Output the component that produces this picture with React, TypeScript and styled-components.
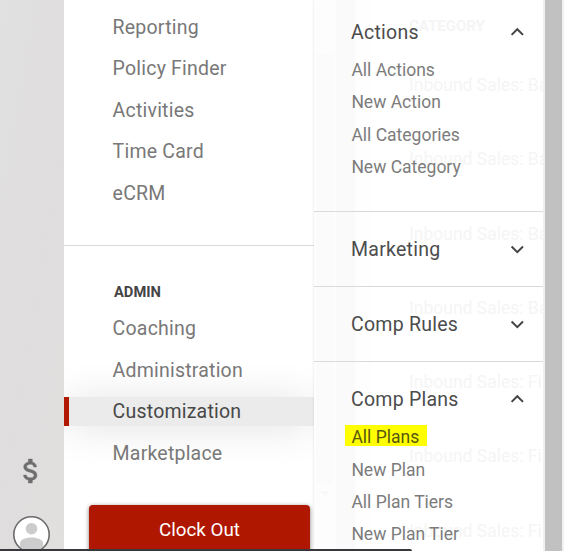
import React from 'react';
import styled, { createGlobalStyle } from 'styled-components';

const GlobalStyle = createGlobalStyle`
  * {
    box-sizing: border-box;
  }

  body {
    margin: 0;
    background: #fff;
    font-family: Roboto, "Liberation Sans", sans-serif;
    overflow: hidden;
  }
`;

const Screen = styled.div`
  position: relative;
  display: flex;
  width: 564px;
  height: 551px;
  overflow: hidden;
  background: #fff;
`;

const Rail = styled.div`
  display: flex;
  flex-direction: column;
  justify-content: flex-end;
  align-items: center;
  width: 64px;
  padding-right: 2px;
  background: linear-gradient(100deg, #e2e1e1, #dfdddd 55%, #e2dfdf);
`;

const DollarIcon = styled.svg`
  width: 32px;
  height: 32px;
  margin-bottom: 28px;
`;

const Avatar = styled.svg`
  width: 38px;
  height: 38px;
  margin-bottom: -2px;
  flex-shrink: 0;
`;

const Sidebar = styled.nav`
  display: flex;
  flex-direction: column;
  width: 250px;
  padding-top: 6.5px;
  background: #fff;
  overflow: hidden;
`;

const NavItem = styled.a<{ $active?: boolean }>`
  position: relative;
  display: flex;
  align-items: center;
  flex-shrink: 0;
  height: 41.5px;
  padding-left: 48.6px;
  font-size: 19.5px;
  letter-spacing: 0.21px;
  color: ${({ $active }) => ($active ? '#484848' : '#787878')};
  z-index: ${({ $active }) => ($active ? 0 : 1)};
`;

const ActiveBar = styled.span`
  position: absolute;
  z-index: -1;
  left: 0;
  right: 0;
  top: 6px;
  height: 29px;
  border-left: 5px solid #b11800;
  background: #ebebeb;
  box-shadow: 0 2px 40px -4px rgba(0, 0, 0, 0.17);
`;

const AdminBlock = styled.div`
  display: flex;
  flex-direction: column;
  margin-top: 31px;
  border-top: 1px solid #dadada;
`;

const AdminTitle = styled.div`
  margin: 38px 0 7px 50px;
  font-size: 14.7px;
  line-height: 17px;
  font-weight: 700;
  color: #444;
`;

const ClockButton = styled.button`
  width: 221px;
  height: 50px;
  flex-shrink: 0;
  margin: 31px 0 0 25px;
  padding: 0 0 1px;
  border: 0;
  border-radius: 4px;
  background: #b01700;
  box-shadow: 0 1px 4px rgba(0, 0, 0, 0.5);
  font: 400 18.8px Roboto, sans-serif;
  color: #fff;
`;

const Flyout = styled.div`
  position: relative;
  width: 229px;
  background: #fff;
  box-shadow: -1px 0 2px rgba(0, 0, 0, 0.06);
  overflow: hidden;
  z-index: 1;
`;

/* the page below shows faintly through the flyout */
const Backdrop = styled.div`
  position: absolute;
  inset: 0;
  background: linear-gradient(
    to right,
    #fdfdfd 0 22px,
    #fafafa 22px 41px,
    #fefefe 41px 57px,
    #fff 57px
  );
`;

const BackdropTrack = styled.div`
  position: absolute;
  left: 2px;
  top: 54px;
  width: 17px;
  height: 430px;
  background: #fbfbfb;
`;

const BackdropArrow = styled.div`
  position: absolute;
  left: 6px;
  top: 491px;
  border: 5px solid transparent;
  border-top-color: #f8f8f8;
`;

const BackdropTable = styled.div`
  position: absolute;
  left: 95px;
  top: 16px;
  white-space: nowrap;
  font-size: 17.5px;
  color: #f5f5f5;
`;

const BackdropHead = styled.div`
  height: 32px;
  font-size: 15px;
  line-height: 20px;
  font-weight: 700;
`;

const BackdropRow = styled.div`
  height: 74.3px;
  line-height: 74.3px;
`;

const Sections = styled.div`
  position: relative;
  display: flex;
  flex-direction: column;
  margin-top: -5px;
`;

const Section = styled.div`
  flex-shrink: 0;
  border-bottom: 1px solid #dadada;
`;

const SectionHead = styled.div`
  display: flex;
  justify-content: space-between;
  align-items: center;
  height: 74px;
  padding: 0 17px 0 37px;
  font-size: 19.5px;
  letter-spacing: 0.25px;
  color: #4c4c4c;
`;

const SubList = styled.div`
  margin-top: -17px;
  padding: 2.4px 0 27.6px 31px;
`;

const SubItem = styled.div`
  display: flex;
  align-items: center;
  height: 32.3px;
  font-size: 17.5px;
  color: #7c7c7c;
`;

const Label = styled.span<{ $marked?: boolean }>`
  margin-top: -4px;
  padding: 4px 8px 0 6.4px;
  line-height: 17px;
  background: ${({ $marked }) => ($marked ? '#ff0' : 'transparent')};
  color: ${({ $marked }) => ($marked ? '#57570f' : 'inherit')};
`;

const Scrollbar = styled.div`
  width: 21px;
  border: solid #f1f1f1;
  border-width: 0 2px;
  background: #c1c1c1;
`;

const StatusBar = styled.div`
  position: absolute;
  z-index: 2;
  left: 0;
  bottom: 0;
  width: 412px;
  height: 2px;
  border-top-right-radius: 3px;
  background: #38373c;
`;

const Chevron: React.FC<{ open?: boolean }> = ({ open }) => (
  <svg width="18" height="18" viewBox="0 0 18 18" fill="none" stroke="#444" strokeWidth="2">
    <path d={open ? 'M3.6 11.9 9.3 6.2l5.7 5.7' : 'M3.6 6.5 9.3 12.2l5.7-5.7'} />
  </svg>
);

const mainLinks = ['Reporting', 'Policy Finder', 'Activities', 'Time Card', 'eCRM'];
const adminLinks = ['Coaching', 'Administration', 'Customization', 'Marketplace'];

const sections = [
  { title: 'Actions', items: ['All Actions', 'New Action', 'All Categories', 'New Category'] },
  { title: 'Marketing', items: [] },
  { title: 'Comp Rules', items: [] },
  { title: 'Comp Plans', items: ['All Plans', 'New Plan', 'All Plan Tiers', 'New Plan Tier'] },
];

const rows = [
  'Inbound Sales: Ba',
  'Inbound Sales: Ba',
  'Inbound Sales: Ba',
  'Inbound Sales: Ba',
  'Inbound Sales: Fi',
  'Inbound Sales: Fi',
  'Inbound Sales: Fi',
];

const App: React.FC = () => {
  return (
    <>
      <GlobalStyle />
      <Screen>
        <Rail>
          <DollarIcon viewBox="0 0 24 24" fill="#6e6e6e" stroke="#6e6e6e" strokeWidth="0.3">
            <path d="M11.8 10.9c-2.27-.59-3-1.2-3-2.15 0-1.09 1.01-1.85 2.7-1.85 1.78 0 2.44.85 2.5 2.1h2.21c-.07-1.72-1.12-3.3-3.21-3.81V3h-3v2.16c-1.94.42-3.5 1.68-3.5 3.61 0 2.31 1.91 3.46 4.7 4.13 2.5.6 3 1.48 3 2.41 0 .69-.49 1.79-2.7 1.79-2.06 0-2.87-.92-2.98-2.1h-2.2c.12 2.19 1.76 3.42 3.68 3.83V21h3v-2.15c1.95-.37 3.5-1.5 3.5-3.55 0-2.84-2.43-3.81-4.7-4.4z" />
          </DollarIcon>
          <Avatar viewBox="0 0 38 38">
            <defs>
              <clipPath id="face">
                <circle cx="19.5" cy="19.5" r="17" />
              </clipPath>
            </defs>
            <circle cx="19.5" cy="19.5" r="17.7" fill="#fff" stroke="#6b6b6b" strokeWidth="1.6" />
            <g clipPath="url(#face)" fill="#ccc">
              <circle cx="19.5" cy="13.7" r="5.8" />
              <path d="M7.8 38V28.7c0-4 5.5-6.2 11.7-6.2s11.7 2.2 11.7 6.2V38z" />
            </g>
          </Avatar>
        </Rail>
        <Sidebar>
          {mainLinks.map((link) => (
            <NavItem key={link}>{link}</NavItem>
          ))}
          <AdminBlock>
            <AdminTitle>ADMIN</AdminTitle>
            {adminLinks.map((link) => (
              <NavItem key={link} $active={link === 'Customization'}>
                {link === 'Customization' && <ActiveBar />}
                {link}
              </NavItem>
            ))}
          </AdminBlock>
          <ClockButton>Clock Out</ClockButton>
        </Sidebar>
        <Flyout>
          <Backdrop>
            <BackdropTrack />
            <BackdropArrow />
            <BackdropTable>
              <BackdropHead>CATEGORY</BackdropHead>
              {rows.map((row, i) => (
                <BackdropRow key={i}>{row}</BackdropRow>
              ))}
            </BackdropTable>
          </Backdrop>
          <Sections>
            {sections.map(({ title, items }) => (
              <Section key={title}>
                <SectionHead>
                  {title}
                  <Chevron open={items.length > 0} />
                </SectionHead>
                {items.length > 0 && (
                  <SubList>
                    {items.map((item) => (
                      <SubItem key={item}>
                        <Label $marked={item === 'All Plans'}>{item}</Label>
                      </SubItem>
                    ))}
                  </SubList>
                )}
              </Section>
            ))}
          </Sections>
        </Flyout>
        <Scrollbar />
        <StatusBar />
      </Screen>
    </>
  );
};

export default App;
